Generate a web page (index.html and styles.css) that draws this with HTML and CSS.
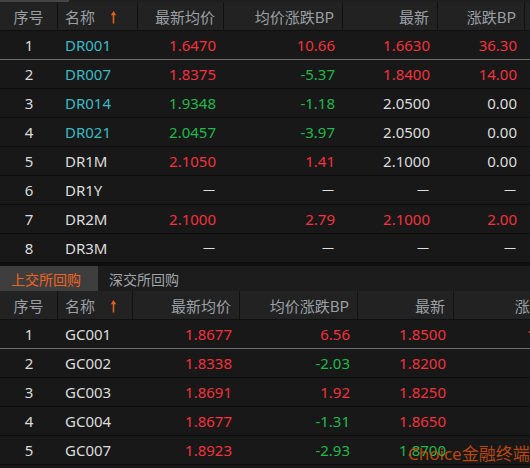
FILE: index.html
```html
<!DOCTYPE html>
<html>
<head>
<meta charset="utf-8">
<link rel="stylesheet" href="styles.css">
</head>
<body>
<div class="app">
  <div class="scrollbar"><div class="thumb"></div></div>
  <div class="grid top">
    <div class="row head">
      <div class="c center">序号</div>
      <div class="c left">名称<svg class="arrow" width="7" height="14" viewBox="0 0 7 14"><path d="M3.5 1 L0.8 5.2 H2.7 V13.5 H4.3 V5.2 H6.2 Z" fill="#e0601c"/></svg></div>
      <div class="c">最新均价</div>
      <div class="c">均价涨跌BP</div>
      <div class="c">最新</div>
      <div class="c">涨跌BP</div>
      <div class="c"></div>
    </div>
    <div class="row sel">
      <div class="c center w">1</div><div class="c left cy">DR001</div><div class="c r">1.6470</div><div class="c r">10.66</div><div class="c r">1.6630</div><div class="c r">36.30</div><div class="c"></div>
    </div>
    <div class="row">
      <div class="c center w">2</div><div class="c left cy">DR007</div><div class="c r">1.8375</div><div class="c g">-5.37</div><div class="c r">1.8400</div><div class="c r">14.00</div><div class="c"></div>
    </div>
    <div class="row">
      <div class="c center w">3</div><div class="c left cy">DR014</div><div class="c g">1.9348</div><div class="c g">-1.18</div><div class="c w">2.0500</div><div class="c w">0.00</div><div class="c"></div>
    </div>
    <div class="row">
      <div class="c center w">4</div><div class="c left cy">DR021</div><div class="c g">2.0457</div><div class="c g">-3.97</div><div class="c w">2.0500</div><div class="c w">0.00</div><div class="c"></div>
    </div>
    <div class="row">
      <div class="c center w">5</div><div class="c left w">DR1M</div><div class="c r">2.1050</div><div class="c r">1.41</div><div class="c w">2.1000</div><div class="c w">0.00</div><div class="c"></div>
    </div>
    <div class="row">
      <div class="c center w">6</div><div class="c left w">DR1Y</div><div class="c w dash">—</div><div class="c w dash">—</div><div class="c w dash">—</div><div class="c w dash">—</div><div class="c"></div>
    </div>
    <div class="row">
      <div class="c center w">7</div><div class="c left w">DR2M</div><div class="c r">2.1000</div><div class="c r">2.79</div><div class="c r">2.1000</div><div class="c r">2.00</div><div class="c"></div>
    </div>
    <div class="row">
      <div class="c center w">8</div><div class="c left w">DR3M</div><div class="c w dash">—</div><div class="c w dash">—</div><div class="c w dash">—</div><div class="c w dash">—</div><div class="c"></div>
    </div>
  </div>
  <div class="gap"></div>
  <div class="tabs">
    <div class="tab active">上交所回购</div>
    <div class="tab">深交所回购</div>
  </div>
  <div class="grid bottom">
    <div class="row head">
      <div class="c center">序号</div>
      <div class="c left">名称<svg class="arrow" width="7" height="14" viewBox="0 0 7 14"><path d="M3.5 1 L0.8 5.2 H2.7 V13.5 H4.3 V5.2 H6.2 Z" fill="#e0601c"/></svg></div>
      <div class="c">最新均价</div>
      <div class="c">均价涨跌BP</div>
      <div class="c">最新</div>
      <div class="c">涨跌BP</div>
    </div>
    <div class="row sel">
      <div class="c center w">1</div><div class="c left w">GC001</div><div class="c r">1.8677</div><div class="c r">6.56</div><div class="c r">1.8500</div><div class="c r">15.00</div>
    </div>
    <div class="row">
      <div class="c center w">2</div><div class="c left w">GC002</div><div class="c r">1.8338</div><div class="c g">-2.03</div><div class="c r">1.8200</div><div class="c r">5.00</div>
    </div>
    <div class="row">
      <div class="c center w">3</div><div class="c left w">GC003</div><div class="c r">1.8691</div><div class="c r">1.92</div><div class="c r">1.8250</div><div class="c r">2.50</div>
    </div>
    <div class="row">
      <div class="c center w">4</div><div class="c left w">GC004</div><div class="c r">1.8677</div><div class="c g">-1.31</div><div class="c r">1.8650</div><div class="c r">6.50</div>
    </div>
    <div class="row">
      <div class="c center w">5</div><div class="c left w">GC007</div><div class="c r">1.8923</div><div class="c g">-2.93</div><div class="c g">1.8700</div><div class="c g">-3.00</div>
    </div>
  </div>
  <div class="watermark">Choice金融终端</div>
</div>
</body>
</html>
```
FILE: styles.css
```css
html, body {
  margin: 0;
  padding: 0;
  background: #181818;
}
.app {
  position: relative;
  width: 530px;
  height: 468px;
  overflow: hidden;
  background: #181818;
  font-family: "Noto Sans", "Noto Sans CJK SC", sans-serif;
  font-size: 15px;
}
.scrollbar {
  height: 2px;
  background: #1e1e1e;
}
.thumb {
  width: 69px;
  height: 2px;
  background: #454545;
}
.grid {
  display: flex;
  flex-direction: column;
}
.row {
  display: grid;
  height: 28px;
  border-bottom: 1px solid #0d0d0d;
  background: #181818;
}
.top .row {
  grid-template-columns: 58px 80px 86px 119px 95px 87px 40px;
}
.bottom .row {
  grid-template-columns: 58px 75px 107px 118px 96px 119px;
}
.row.sel {
  border-bottom-color: #6e6e6e;
}
.row.head {
  background: #222222;
  border-bottom-color: #101010;
}
.c {
  display: flex;
  align-items: center;
  justify-content: flex-end;
  padding: 0 8px 0 0;
  white-space: nowrap;
  overflow: visible;
  line-height: 1;
}
.head .c {
  border-right: 1px solid #111111;
  color: #9aa0a6;
  font-family: "Noto Sans CJK SC", sans-serif;
  font-size: 15px;
}
.c.center {
  justify-content: center;
  padding: 0;
}
.c.left {
  justify-content: flex-start;
  padding: 0 0 0 7px;
}
.head .c.left {
  padding-left: 7px;
}
.arrow {
  display: block;
  margin-left: 15px;
  margin-top: 1px;
}
.w { color: #dcdcdc; }
.cy { color: #3cb8c4; }
.r { color: #f2323c; }
.g { color: #20b84a; }
.dash {
  font-size: 12px;
  padding-right: 9px;
}
.gap {
  height: 3px;
  background: #0f0f0f;
}
.tabs {
  display: flex;
  height: 25px;
  background: #1c1c1c;
}
.tab {
  display: flex;
  align-items: center;
  padding: 0 14px 0 11px;
  color: #a0a6aa;
  font-family: "Noto Sans CJK SC", sans-serif;
  font-size: 14px;
}
.tab.active {
  background: #3e3e3e;
  color: #f0641e;
  padding-right: 17px;
}
.watermark {
  position: absolute;
  left: 408px;
  top: 442px;
  color: rgba(214, 80, 16, 0.85);
  font-family: "Noto Sans", "Noto Sans CJK SC", sans-serif;
  font-size: 17px;
  line-height: 24px;
  white-space: nowrap;
}
```
